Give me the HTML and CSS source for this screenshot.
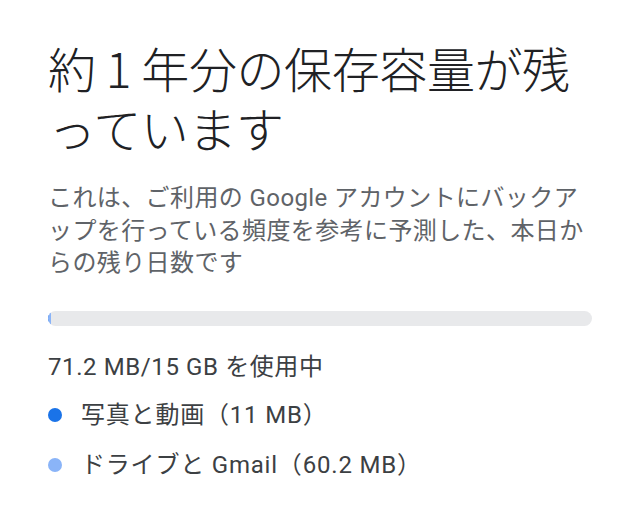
FILE: index.html
```html
<!DOCTYPE html>
<html lang="ja">
<head>
<meta charset="utf-8">
<link rel="stylesheet" href="styles.css">
</head>
<body>
<main class="page">
  <h1 class="title">約 1 年分の保存容量が残っています</h1>
  <p class="desc">これは、ご利用の Google アカウントにバックアップを行っている頻度を参考に予測した、本日からの残り日数です</p>
  <div class="bar">
    <div class="seg seg-photos" style="width:0.4px"></div>
    <div class="seg seg-drive" style="width:2.2px"></div>
  </div>
  <p class="usage">71.2 MB/15 GB を使用中</p>
  <ul class="legend">
    <li class="legend-item"><span class="dot dot-photos"></span>写真と動画（11 MB）</li>
    <li class="legend-item"><span class="dot dot-drive"></span>ドライブと Gmail（60.2 MB）</li>
  </ul>
</main>
</body>
</html>
```
FILE: styles.css
```css
html, body {
  margin: 0;
  padding: 0;
  background: #ffffff;
}
.page {
  padding: 37px 48px 0 48px;
  font-family: Roboto, "Noto Sans CJK JP", sans-serif;
}
.title {
  margin: 0;
  font-family: "Noto Sans CJK JP", sans-serif;
  font-weight: 300;
  font-size: 48px;
  line-height: 60px;
  letter-spacing: -0.4px;
  color: #202124;
}
.desc {
  margin: 25px 0 0 0;
  font-size: 24px;
  line-height: 32.5px;
  letter-spacing: 0.4px;
  color: #5f6368;
}
.bar {
  margin-top: 31px;
  height: 15px;
  border-radius: 8px;
  background: #e8e9eb;
  display: flex;
  overflow: hidden;
}
.seg { height: 100%; }
.seg-photos { background: #1a73e8; }
.seg-drive { background: #8ab4f8; }
.usage {
  margin: 25px 0 0 0;
  font-size: 24px;
  line-height: 32px;
  letter-spacing: 0.6px;
  color: #3c4043;
}
.legend {
  list-style: none;
  margin: 16px 0 0 0;
  padding: 0;
  display: flex;
  flex-direction: column;
  gap: 18px;
}
.legend-item {
  display: flex;
  align-items: center;
  gap: 19px;
  font-size: 24px;
  line-height: 32px;
  letter-spacing: 0.8px;
  color: #3c4043;
}
.dot {
  width: 14px;
  height: 14px;
  border-radius: 50%;
  flex: none;
}
.dot-photos { background: #1a73e8; }
.dot-drive { background: #8ab4f8; }
```
